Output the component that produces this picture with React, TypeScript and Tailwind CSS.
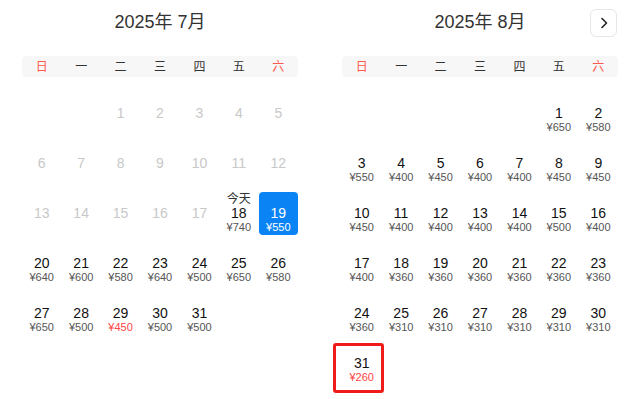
import React from 'react';

type Day = {
  day: number;
  price?: number;
  disabled?: boolean;
  today?: boolean;
  selected?: boolean;
  lowest?: boolean;
  marked?: boolean;
};

const WEEKDAYS = ['日', '一', '二', '三', '四', '五', '六'];

const julyPrices: Record<number, number> = {
  18: 740, 19: 550, 20: 640, 21: 600, 22: 580, 23: 640, 24: 500, 25: 650,
  26: 580, 27: 650, 28: 500, 29: 450, 30: 500, 31: 500,
};

const augPrices = [
  650, 580, 550, 400, 450, 400, 400, 450, 450, 450, 400, 400, 400, 400, 500, 400,
  400, 360, 360, 360, 360, 360, 360, 360, 310, 310, 310, 310, 310, 310, 260,
];

const july: Day[] = Array.from({ length: 31 }, (_, i) => {
  const d = i + 1;
  if (d < 18) return { day: d, disabled: true };
  return { day: d, price: julyPrices[d], today: d === 18, selected: d === 19, lowest: d === 29 };
});

const august: Day[] = augPrices.map((p, i) => ({
  day: i + 1,
  price: p,
  lowest: i === 30,
  marked: i === 30,
}));

function DayCell({ d }: { d: Day }) {
  if (d.disabled) {
    return (
      <div className="h-[43px] flex flex-col items-center">
        <div className="h-[14px]" />
        <div className="h-[14px] leading-[14px] text-[14px] text-[#c8c8c8]">{d.day}</div>
      </div>
    );
  }
  return (
    <div
      className={`relative h-[43px] flex flex-col items-center rounded-[4px] ${
        d.selected ? 'bg-[#0a84f5] text-white' : ''
      }`}
    >
      <div className={`h-[14px] leading-[14px] text-[12px] ${d.selected ? '' : 'text-[#333]'}`}>
        {d.today ? '今天' : ''}
      </div>
      <div className={`h-[14px] leading-[14px] text-[14px] ${d.selected ? '' : 'text-[#111]'}`}>{d.day}</div>
      <div
        className={`h-[14px] leading-[14px] text-[11px] ${
          d.selected ? '' : d.lowest ? 'text-[#ff4545]' : 'text-[#555]'
        }`}
      >
        ¥{d.price}
      </div>
      {d.marked && (
        <div className="absolute -left-[9px] -right-[3px] top-[1px] -bottom-[8px] border-[3px] border-[#f01c1c] rounded-[3px]" />
      )}
    </div>
  );
}

function Month({ title, offset, days, showNext }: { title: string; offset: number; days: Day[]; showNext?: boolean }) {
  return (
    <div className="relative w-[320px] px-[22px]">
      <div className="h-[44px] pt-[8px] text-center text-[18px] leading-[28px] text-[#333]">{title}</div>
      {showNext && (
        <button className="absolute right-[23px] top-[9px] w-[27px] h-[28px] flex items-center justify-center border border-[#e6e6e6] rounded-[6px] bg-white">
          <svg width="10" height="12" viewBox="0 0 10 12" fill="none">
            <path d="M3 1.5 L7.5 6 L3 10.5" stroke="#222" strokeWidth="1.6" strokeLinecap="round" strokeLinejoin="round" />
          </svg>
        </button>
      )}
      <div className="mt-[12px] h-[21px] grid grid-cols-7 items-center bg-[#f7f7f7] rounded-[4px] text-[12px]">
        {WEEKDAYS.map((w, i) => (
          <div key={w} className={`text-center ${i === 0 || i === 6 ? 'text-[#ff5a4f]' : 'text-[#333]'}`}>
            {w}
          </div>
        ))}
      </div>
      <div className="mt-[15px] grid grid-cols-7 gap-y-[7px]">
        {Array.from({ length: offset }, (_, i) => (
          <div key={'e' + i} />
        ))}
        {days.map((d) => (
          <DayCell key={d.day} d={d} />
        ))}
      </div>
    </div>
  );
}

export default function App() {
  return (
    <div
      className="w-[640px] h-[399px] bg-white flex overflow-hidden"
      style={{ fontFamily: '"Liberation Sans", "Noto Sans CJK SC", sans-serif' }}
    >
      <Month title="2025年 7月" offset={2} days={july} />
      <Month title="2025年 8月" offset={5} days={august} showNext />
    </div>
  );
}
